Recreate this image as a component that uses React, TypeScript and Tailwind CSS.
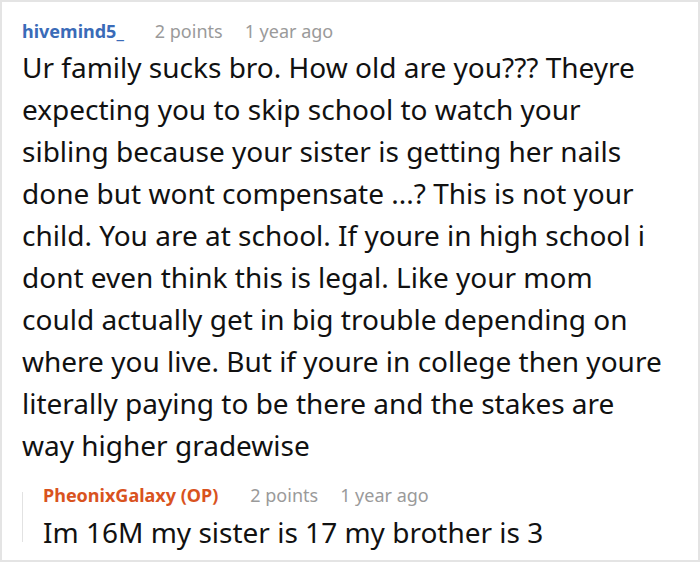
import React from 'react';

const App: React.FC = () => {
  // line breaks as they fall in the original comment
  const lines = [
    'Ur family sucks bro. How old are you??? Theyre',
    'expecting you to skip school to watch your',
    'sibling because your sister is getting her nails',
    'done but wont compensate ...? This is not your',
    'child. You are at school. If youre in high school i',
    'dont even think this is legal. Like your mom',
    'could actually get in big trouble depending on',
    'where you live. But if youre in college then youre',
    'literally paying to be there and the stakes are',
    'way higher gradewise',
  ];

  return (
    <div className="w-[700px] h-[562px] bg-white border-2 border-[#e4e4e4] overflow-hidden font-['Noto_Sans',sans-serif]">
      <div className="pl-[20px] pr-[20px] pt-[17px]">
        <div className="flex items-center h-[24px] text-[18px] leading-[24px]">
          <span className="font-bold text-[#3a6bb8]">hivemind5_</span>
          <span className="ml-[31px] text-[#9a9a9a]">2 points</span>
          <span className="ml-[22px] text-[#9a9a9a]">1 year ago</span>
        </div>
        <p className="mt-[3px] text-[28px] leading-[42px] text-[#111]">
          {lines.map((line, i) => (
            <span key={i} className="block whitespace-nowrap">{line}</span>
          ))}
        </p>

        {/* reply */}
        <div className="mt-[17px] flex">
          <div className="w-px mt-[9px] mb-[11px] bg-[#e2e2e2]" />
          <div className="ml-[20px]">
            <div className="flex items-center h-[24px] text-[18px] leading-[24px]">
              <span className="font-bold text-[#d9531e]">PheonixGalaxy (OP)</span>
              <span className="ml-[32px] text-[#9a9a9a]">2 points</span>
              <span className="ml-[22px] text-[#9a9a9a]">1 year ago</span>
            </div>
            <p className="mt-[4px] text-[28px] leading-[42px] text-[#111]">Im 16M my sister is 17 my brother is 3</p>
          </div>
        </div>
      </div>
    </div>
  );
};

export default App;
